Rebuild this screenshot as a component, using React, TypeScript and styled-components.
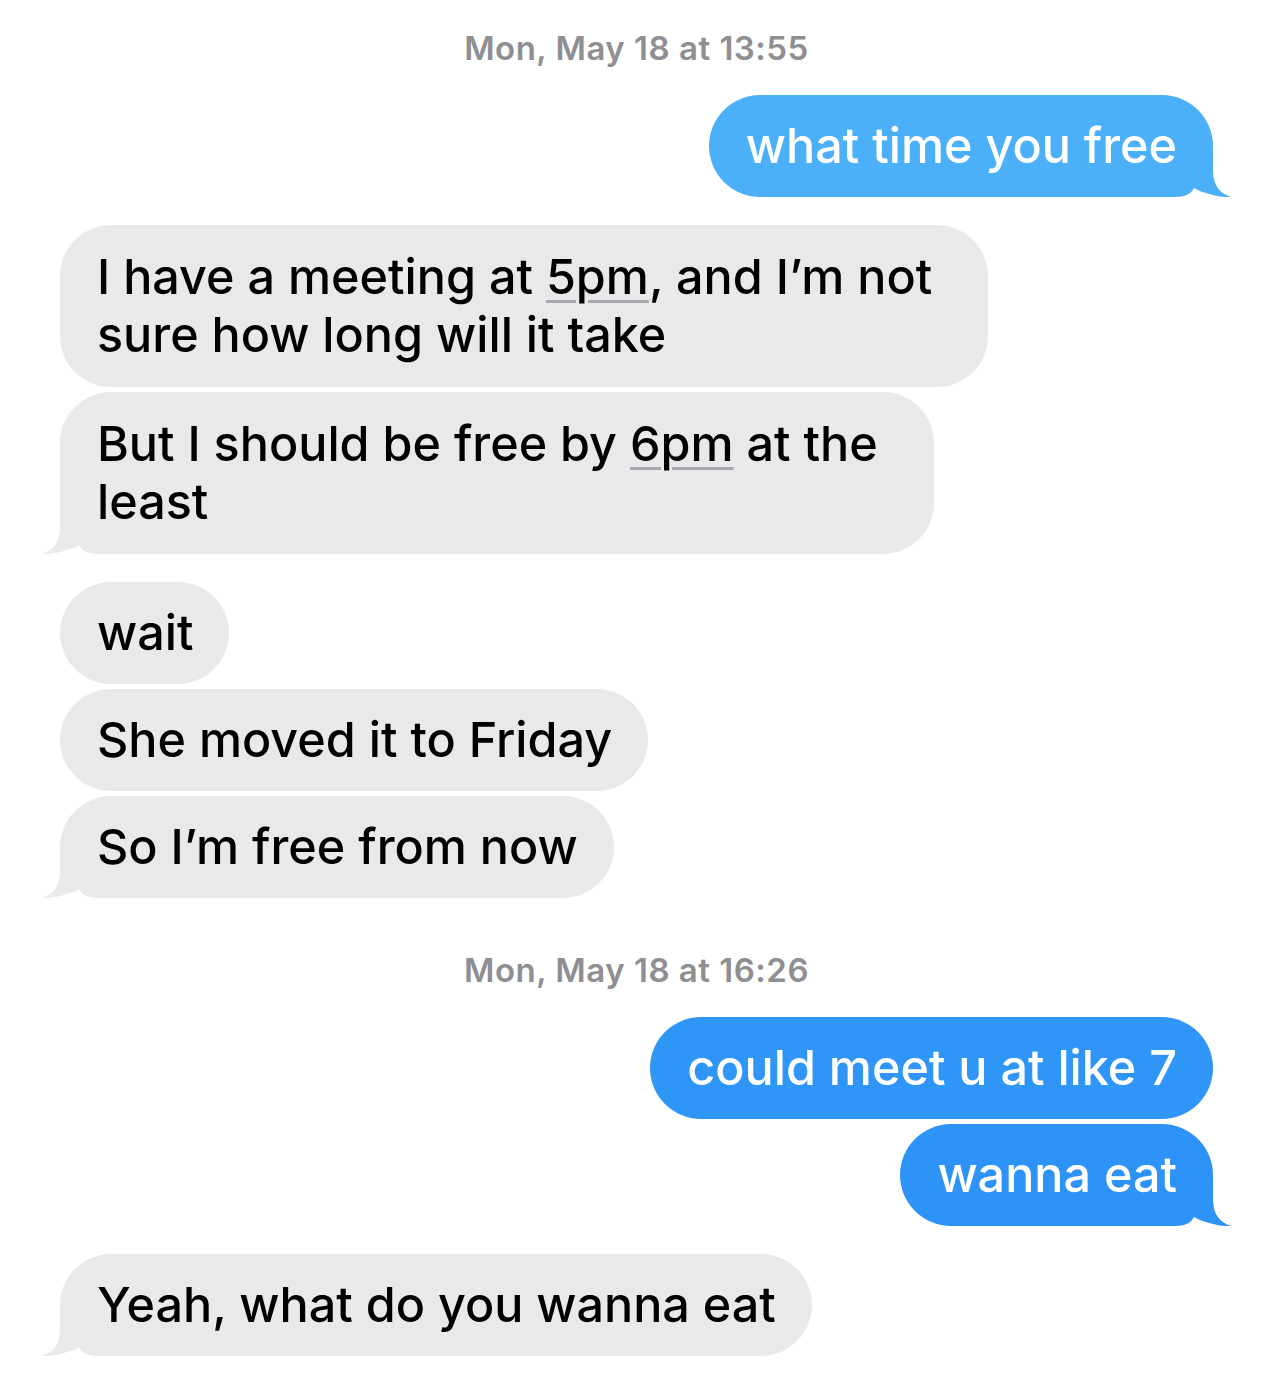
import React from "react";
import styled, { createGlobalStyle } from "styled-components";

const GlobalStyle = createGlobalStyle`
  html, body {
    margin: 0;
    padding: 0;
    background: #ffffff;
  }
  body {
    font-family: Inter, "Noto Sans", "Liberation Sans", sans-serif;
    -webkit-font-smoothing: antialiased;
  }
`;

type Side = "left" | "right";

const Thread = styled.main`
  display: flex;
  flex-direction: column;
  gap: 54px;
  padding: 30px 61px 40px 60px;
`;

const Section = styled.section`
  display: flex;
  flex-direction: column;
  gap: 28px;
`;

const TimeStamp = styled.div`
  margin-bottom: 1px;
  text-align: center;
  font-size: 33px;
  line-height: 36px;
  font-weight: 600;
  letter-spacing: 0.5px;
  color: #8e8e93;
`;

const Group = styled.div<{ $side: Side }>`
  display: flex;
  flex-direction: column;
  gap: 5px;
  align-items: ${(p) => (p.$side === "right" ? "flex-end" : "flex-start")};
`;

const Bubble = styled.div<{ $side: Side; $color: string; $multi: boolean }>`
  position: relative;
  box-sizing: border-box;
  padding: ${(p) => (p.$multi ? "23px 56px 23px 37px" : "22px 36px 22px 37px")};
  border-radius: 51px;
  background: ${(p) => p.$color};
  color: ${(p) => (p.$side === "right" ? "#ffffff" : "#000000")};
  font-size: 48.5px;
  line-height: 58px;
  font-weight: 500;
  white-space: nowrap;
`;

const BubbleText = styled.span`
  position: relative;
  z-index: 1;
`;

const Detected = styled.span`
  text-decoration: underline;
  text-decoration-color: #a9a9ad;
  text-decoration-thickness: 3px;
  text-underline-offset: 6px;
  text-decoration-skip-ink: auto;
`;

const TailSvg = styled.svg<{ $side: Side }>`
  position: absolute;
  z-index: 0;
  bottom: 0;
  width: 82px;
  height: 48px;
  ${(p) =>
    p.$side === "right"
      ? "right: -18px;"
      : "left: -18px; transform: scaleX(-1);"}
`;

const Tail: React.FC<{ side: Side; color: string }> = ({ side, color }) => (
  <TailSvg $side={side} viewBox="0 0 82 48" aria-hidden="true">
    <path
      d="M0 48 L0 0 L64 0 L64 22 C64.5 37 71 44.5 82 48 C72 48.6 57 45.5 45 39 C42 45 36 48 26 48 Z"
      fill={color}
    />
  </TailSvg>
);

type Part = string | { detected: string };

type Msg = {
  lines: Part[][];
  tail?: boolean;
  color?: string;
};

const GRAY = "#e9e9eb";

const Message: React.FC<{ side: Side; msg: Msg }> = ({ side, msg }) => {
  const color = msg.color ?? GRAY;
  return (
    <Bubble $side={side} $color={color} $multi={msg.lines.length > 1}>
      {msg.tail && <Tail side={side} color={color} />}
      <BubbleText>
        {msg.lines.map((line, i) => (
          <React.Fragment key={i}>
            {i > 0 && <br />}
            {line.map((part, j) =>
              typeof part === "string" ? (
                <React.Fragment key={j}>{part}</React.Fragment>
              ) : (
                <Detected key={j}>{part.detected}</Detected>
              )
            )}
          </React.Fragment>
        ))}
      </BubbleText>
    </Bubble>
  );
};

type GroupData = { side: Side; messages: Msg[] };
type SectionData = { time: string; groups: GroupData[] };

const data: SectionData[] = [
  {
    time: "Mon, May 18 at 13:55",
    groups: [
      {
        side: "right",
        messages: [
          { lines: [["what time you free"]], tail: true, color: "#4bb0f8" },
        ],
      },
      {
        side: "left",
        messages: [
          {
            lines: [
              ["I have a meeting at ", { detected: "5pm" }, ", and I\u2019m not"],
              ["sure how long will it take"],
            ],
          },
          {
            lines: [
              ["But I should be free by ", { detected: "6pm" }, " at the"],
              ["least"],
            ],
            tail: true,
          },
        ],
      },
      {
        side: "left",
        messages: [
          { lines: [["wait"]] },
          { lines: [["She moved it to Friday"]] },
          { lines: [["So I\u2019m free from now"]], tail: true },
        ],
      },
    ],
  },
  {
    time: "Mon, May 18 at 16:26",
    groups: [
      {
        side: "right",
        messages: [
          { lines: [["could meet u at like 7"]], color: "#2f95f7" },
          { lines: [["wanna eat"]], tail: true, color: "#2e93f7" },
        ],
      },
      {
        side: "left",
        messages: [
          { lines: [["Yeah, what do you wanna eat"]], tail: true },
        ],
      },
    ],
  },
];

export default function App() {
  return (
    <>
      <GlobalStyle />
      <Thread>
        {data.map((section, si) => (
          <Section key={si}>
            <TimeStamp>{section.time}</TimeStamp>
            {section.groups.map((g, gi) => (
              <Group key={gi} $side={g.side}>
                {g.messages.map((m, mi) => (
                  <Message key={mi} side={g.side} msg={m} />
                ))}
              </Group>
            ))}
          </Section>
        ))}
      </Thread>
    </>
  );
}
